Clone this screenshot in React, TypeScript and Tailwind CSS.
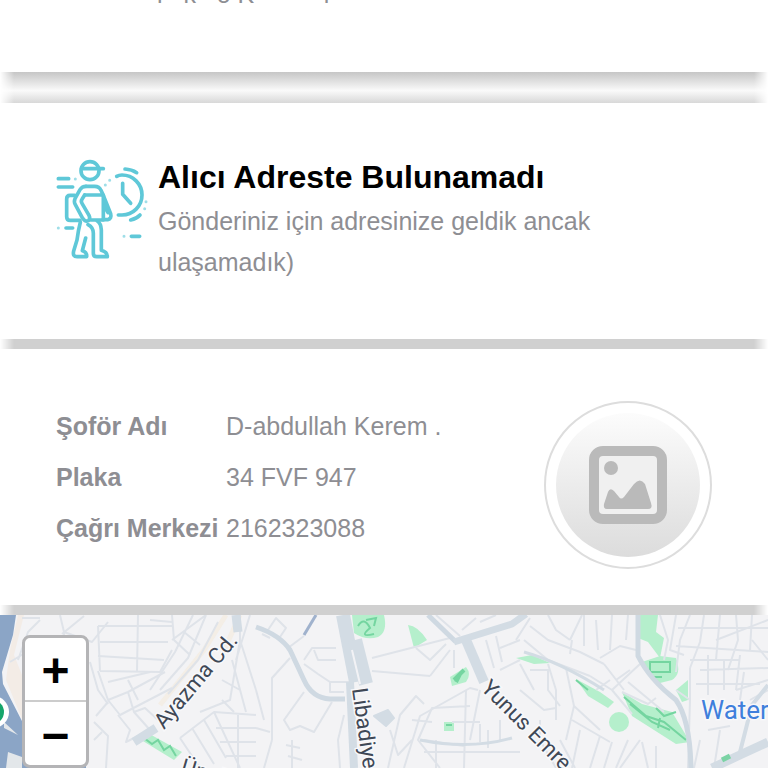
const driverInfo = [
  { label: "Şoför Adı", value: "D-abdullah Kerem ." },
  { label: "Plaka", value: "34 FVF 947" },
  { label: "Çağrı Merkezi", value: "2162323088" },
];

const sideFade =
  "[mask-image:linear-gradient(to_right,transparent,black_14px,black_calc(100%-14px),transparent)]";

const minorRoads = [
  // west
  "M18 660 L28 632 L40 620 M22 618 H40 M10 662 L30 650 M60 615 L64 632 L92 642 L108 622 M62 634 L84 616 M64 632 V640",
  "M138 615 L137 671 M98 626 H172 M100 642 H168 M98 656 L164 660 M100 671 L160 672 L172 650 M172 615 L174 640 L190 655 M98 626 L100 671",
  "M172 640 L206 615 M184 632 L200 645 M150 620 L172 622 M193 615 L175 652 L150 690 M206 615 L188 658 L160 690 M218 622 L198 660 L168 694",
  "M98 671 L108 700 L128 692 L165 672 M108 700 L120 715 L172 688 M128 680 L138 700 M128 692 L134 712 L150 730 M108 682 L150 672 M90 662 L98 690 L108 704",
  "M96 716 L108 702 M94 722 L108 736 L106 768 M94 740 L102 732 M118 715 L130 730 L126 742 L140 735 M134 712 L145 708 L158 720",
  "M240 640 L230 700 L200 712 M250 615 L236 660 M232 660 L246 712 M222 680 L240 690 M222 700 L234 712 M240 615 V640 L256 690",
  "M180 738 L200 768 M192 728 L214 764 M204 720 L226 758 M214 712 L240 768 M180 738 L214 712 L256 715 M216 728 H256 M220 742 H256 M226 756 H256 M238 715 V768",
  // centre
  "M268 630 L276 618 L286 628 L278 640 M262 634 L270 638 M288 648 L304 636 M304 660 L312 648 H336 M314 650 L318 660 H336 M304 664 L318 674 L330 682 H350 M330 682 V692 H344",
  "M290 658 L272 678 V740 M256 690 L264 720 M304 692 L284 720 L290 730 L300 726 L314 732 L332 702 M344 715 L338 740 L340 768 M272 740 L264 768 M256 728 L270 732 M286 745 L300 748 M288 756 L302 760 M292 740 V768",
  "M372 658 L450 638 M372 671 L430 676 M416 648 L430 660 L446 644 M430 676 L450 650 M388 768 L400 715 L416 696 L424 704 M404 768 L420 716 L470 688 L478 690 M390 730 L398 755 L412 740",
  "M440 768 L418 740 L432 708 L470 706 M454 650 V668 M466 690 L464 768 M424 740 L464 746 M452 722 H480 M480 690 L470 740 M412 720 L432 722 M424 752 H520 M436 740 V768",
  "M436 615 L460 636 M462 630 L476 618 M480 622 L496 615 M486 640 L494 668 M496 636 L502 662 M500 648 L520 640 M500 670 L520 660 M500 720 V740 M480 724 V742 M488 730 V748",
  // east
  "M516 640 L530 618 M524 640 L548 660 L590 676 M530 626 L548 640 L580 652 L604 664 M548 615 L556 630 L570 640 M570 640 L582 615 M584 615 V646 M596 620 L598 650 M612 615 L610 650 M628 615 L626 640 M570 654 L572 640",
  "M520 664 L534 690 M530 670 H548 V690 L560 706 M520 690 L544 710 L556 708 M548 664 L556 690 V720 M566 668 L574 706 L566 740 M572 720 L610 742 M574 706 L600 730 M590 676 L612 690 L632 714",
  "M612 690 L640 664 M604 664 L624 690 M600 658 L620 646 L636 650 M610 680 L596 690 M628 682 L664 712 M622 692 L648 704 L656 698 M616 680 L630 670 M628 740 L616 768 M642 742 L648 768 M600 736 L590 768 M580 730 L572 768 M560 740 L575 768 M612 742 L604 768 M656 746 V768 M540 720 V740 L556 768 M640 740 L620 768",
  "M660 615 L668 640 L664 660 M676 615 L670 650 L684 655 M690 615 L680 640 L676 672 M704 615 L700 642 L690 668 M720 615 L716 660 M736 615 L738 640 L728 670 M752 615 L750 650 M678 628 H768 M676 646 L768 652 M690 660 H740 M690 668 V700 M716 640 L768 620",
  "M700 670 L768 668 M696 684 H760 M708 655 V695 M724 660 V690 M740 655 L736 690 M752 640 L768 660 M700 740 L694 768 M708 730 L730 726 M714 768 L720 730 M736 690 L768 680 M744 672 L740 700 M676 690 L690 700 L688 768 M750 700 L768 690",
];

const mainRoads = [
  "M256 627 Q280 635 290 650 L304 680 Q312 698 330 699 H345",
  "M428 615 L456 642",
  "M638 615 L638 656 Q650 680 676 700 Q690 720 691 768",
];

function MapView() {
  return (
    <svg
      className="h-full w-full"
      viewBox="0 615 768 153"
      preserveAspectRatio="xMinYMin slice"
      role="img"
      aria-label="Harita"
    >
      <rect x="0" y="615" width="768" height="153" fill="#f3f3f5" />

      {/* coast */}
      <path d="M18 615 L10 650 L6 680 L24 724 V680 L14 655 L24 615Z" fill="#f3ece6" />
      <path d="M0 615 H16 L13 635 L2 672 L3 684 L24 725 V768 H0Z" fill="#8ba5c6" />
      <path d="M4 722 L18 735 L4 728Z M8 752 L22 757 V768 H6Z" fill="#e3e7ea" />
      <path d="M24 762 H86 V768 H24Z" fill="#8ba5c6" />

      {/* parks */}
      <g fill="#b5efcc">
        <path d="M352 615 H384 Q388 632 378 637 Q366 641 354 633Z" />
        <path d="M408 625 Q418 626 427 640 L414 648Z" />
        <path d="M450 677 L466 667 Q472 674 466 682 L452 686Z" />
        <path d="M638 615 H658 L656 632 L664 638 L660 658 L648 642 L638 638Z" />
        <path d="M642 662 L660 656 L676 658 Q682 674 672 680 L656 684Z" />
        <path d="M676 690 L688 680 V700 L682 702Z" />
        <path d="M576 679 L600 692 L614 702 L608 708 L588 696Z" />
        <path d="M622 692 L642 704 L672 712 L690 742 L676 744 L632 716Z" />
        <circle cx="619" cy="722" r="10" />
        <path d="M516 658 L532 655 L550 663 L534 664Z" />
        <path d="M138 738 L146 732 L182 752 L174 760Z" />
        <path d="M444 722 H454 V731 H444Z" />
      </g>
      <g fill="none" stroke="#74d5a0" strokeWidth="2">
        <path d="M358 626 Q364 616 370 628 Q358 638 374 634 M366 620 L376 618 L374 626" />
        <path d="M454 680 L464 670 M456 682 L460 674" strokeWidth="4" />
        <path d="M650 662 H670 V672 H650Z M654 677 H662" />
        <path d="M576 680 L588 690 M624 697 L646 716 L664 722 L686 740 M630 704 L652 722 L670 730 M656 708 L664 716 L676 712 M660 718 L658 728" />
        <path d="M144 738 L152 744 L158 740 L164 750 L170 746 L176 756 M446 725 H452" />
      </g>

      <g fill="none" stroke="#f4eee6" strokeWidth="5">
        <path d="M226 615 L204 650 L160 705 M240 615 L222 655" />
      </g>
      <g fill="none" stroke="#dfe3e9" strokeWidth="2" strokeLinejoin="round">
        {minorRoads.map((d) => (
          <path key={d} d={d} />
        ))}
      </g>
      <g fill="none" stroke="#cfd9e2" strokeWidth="5" strokeLinejoin="round">
        {mainRoads.map((d) => (
          <path key={d} d={d} />
        ))}
      </g>
      <g fill="none" stroke="#d3dce4" strokeLinejoin="round">
        <path d="M524 652 Q560 662 604 690 M420 740 Q470 750 512 738" strokeWidth="3" />
        <path d="M343 615 L356 682" strokeWidth="14" />
        <path d="M355 640 L366 684" strokeWidth="14" />
        <path d="M350 682 L354 768" strokeWidth="8" />
        <path d="M352 650 L360 684" stroke="#f2f2f5" strokeWidth="2" />
        <path d="M454 642 L512 624 L526 614" strokeWidth="7" />
        <path d="M466 640 L484 682" strokeWidth="10" />
        <path d="M740 752 L752 705 L768 685" strokeWidth="4" />
        <path d="M712 768 L742 754 L768 742" strokeWidth="9" />
        <path d="M236 615 L238 632 M134 742 L156 728" strokeWidth="9" />
        <path d="M374 716 L388 710 L394 718 L386 726Z" fill="#d3dce4" strokeWidth="2" />
      </g>
      <path d="M316 615 L304 635" stroke="#a0b2cd" strokeWidth="3" />
      <path d="M722 760 L730 756" stroke="#7bd3a5" strokeWidth="5" />

      <circle cx="-7" cy="712" r="16" fill="#fff" />
      <circle cx="-8" cy="712" r="12" fill="#16a56b" />

      <g
        className="font-[Roboto,sans-serif] text-[22px]"
        fill="#3f4856"
        stroke="#f8f8fa"
        strokeWidth="3"
        paintOrder="stroke"
      >
        <text transform="translate(164 730) rotate(-50)">Ayazma Cd.</text>
        <text transform="translate(352 689) rotate(82)">Libadiye Cd.</text>
        <text transform="translate(480 689) rotate(45)">Yunus Emre</text>
        <text transform="translate(180 773) rotate(16)">Ünalan</text>
      </g>
      <text
        x="701"
        y="719"
        className="font-[Roboto,sans-serif] text-[26px]"
        fill="#3f7fdc"
        stroke="#f8f8fa"
        strokeWidth="3"
        paintOrder="stroke"
      >
        Water
      </text>
    </svg>
  );
}

function CourierIcon() {
  return (
    <svg
      className="h-[100px] w-[92px] shrink-0"
      viewBox="48 57 276 300"
      fill="none"
      stroke="#5fc8d8"
      strokeWidth="11"
      strokeLinecap="round"
      strokeLinejoin="round"
      aria-hidden="true"
    >
      <circle cx="150" cy="92" r="27" />
      <path d="M125 86 H190" />
      <path d="M104 166 H90 Q80 166 80 177 V230 Q80 241 91 241 H120" />
      <path d="M138 139 Q126 139 120 149 L105 176 Q101 185 106 194 L128 235 Q136 247 145 242 Q152 237 147 226 L126 190 Q122 184 126 178 L134 165" />
      <path d="M138 139 H164 Q178 139 183 151 L190 166 M134 165 H190 V240 H152" />
      <path d="M190 166 L212 221 Q216 236 203 239 H190 M192 198 L204 218" />
      <path d="M121 247 Q115 270 111 300 L101 333 Q97 350 111 350 H140 Q141 336 127 332 L137 294" />
      <path d="M144 254 Q160 262 160 280 V340 Q160 350 170 350 H202 Q202 336 184 331 V270 Q183 250 172 243" />
      <path d="M230 109 Q237 105 246 105 A60 60 0 0 1 246 225 H235 M248 130 V163 L272 190" />
      <path d="M255 87 Q275 88 290 98 M272 240 Q290 236 300 225" />
      <path d="M55 116 H86 M55 141 H98 M78 264 H98 M274 289 H299" />
      <path
        d="M106 117 V117 M55 264 V264 M252 289 V289 M318 185 V185 M314 206 V206 M209 121 V121 M196 135 V135"
        strokeWidth="9"
        opacity="0.6"
      />
    </svg>
  );
}

function DriverPhoto() {
  return (
    <div className="size-[168px] shrink-0 rounded-full border-2 border-[#dddddd] p-2.5">
      <div className="flex size-full items-center justify-center rounded-full bg-linear-to-b from-[#fcfcfc] to-[#dcdcdc]">
        <svg className="size-[78px]" viewBox="0 0 78 78" aria-hidden="true">
          <rect x="5" y="5" width="68" height="68" rx="9" fill="#f0f0f0" stroke="#bababa" strokeWidth="10" />
          <circle cx="22" cy="22" r="7" fill="#bababa" />
          <path
            d="M18 63 Q14 63 15 58 L19 46 Q21 41 25 45 L30 51 Q32 54 35 51 L45 38 Q51 31 56 38 L62 57 Q64 63 59 63Z"
            fill="#bababa"
          />
        </svg>
      </div>
    </div>
  );
}

export default function App() {
  return (
    <div className="flex h-screen flex-col overflow-hidden bg-white font-['Liberation_Sans',Arial,sans-serif] text-[25px] text-[#8e8e93]">
      <section className="shrink-0 overflow-hidden bg-white pr-14 pb-16 pl-[157px]">
        <p className="-mt-5 leading-7 whitespace-pre">l   k   o K          l</p>
      </section>

      <div
        className={`h-[31px] shrink-0 bg-linear-to-b from-[#c6c6c6] via-[#fafafa] via-60% to-[#d8d8d8] ${sideFade}`}
      />

      <section className="flex shrink-0 items-start gap-2.5 bg-white px-14 pt-14 pb-14">
        <CourierIcon />
        <div className="max-w-[460px]">
          <h2 className="mb-1.5 text-[32px] leading-9 font-bold text-black">Alıcı Adreste Bulunamadı</h2>
          <p className="leading-[41px]">Gönderiniz için adresinize geldik ancak ulaşamadık)</p>
        </div>
      </section>

      <div className={`h-2.5 shrink-0 bg-[#d0d0d0] ${sideFade}`} />

      <section className="flex shrink-0 items-start justify-between bg-white px-14 pt-[52px] pb-9">
        <dl className="grid grid-cols-[170px_auto] leading-[51px]">
          {driverInfo.map((row) => (
            <div key={row.label} className="contents">
              <dt className="font-bold whitespace-nowrap">{row.label}</dt>
              <dd>{row.value}</dd>
            </div>
          ))}
        </dl>
        <DriverPhoto />
      </section>

      <div className={`h-2.5 shrink-0 bg-[#d0d0d0] ${sideFade}`} />

      <section className="relative min-h-0 flex-1 overflow-hidden">
        <MapView />
        <div className="absolute top-5 left-[22px] flex flex-col rounded-lg border-[3px] border-[#b4b4b6] bg-white text-5xl leading-none font-bold text-black">
          <button type="button" aria-label="Yakınlaştır" className="h-16 w-[61px] border-b-2 border-[#cccccc] pt-1">
            +
          </button>
          <button type="button" aria-label="Uzaklaştır" className="h-[63px] w-[61px] pt-1">
            −
          </button>
        </div>
      </section>
    </div>
  );
}
